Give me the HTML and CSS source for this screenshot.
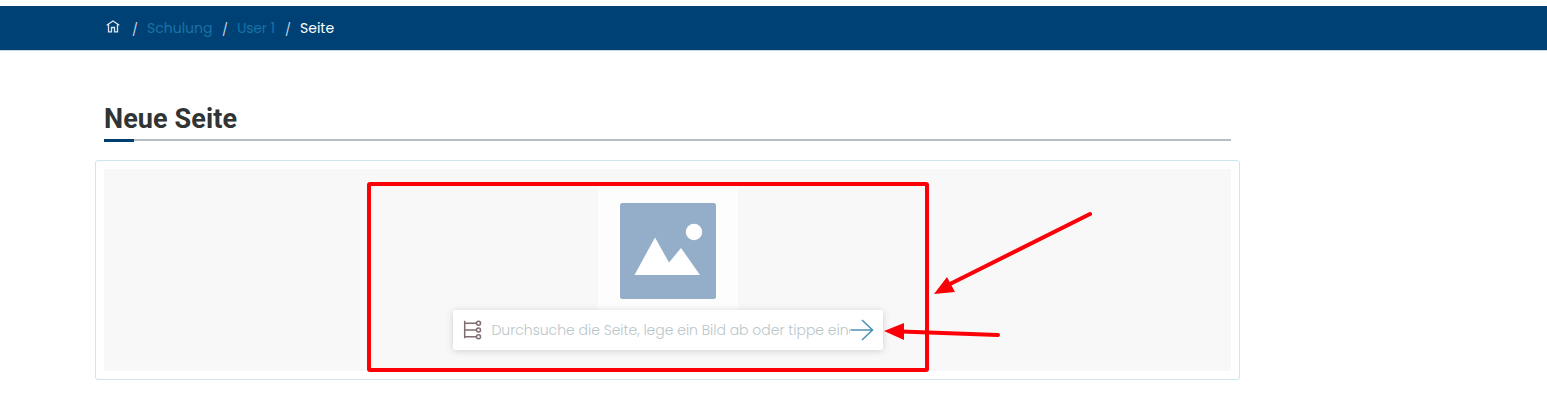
FILE: index.html
```
<!DOCTYPE html>
<html lang="de">
<head>
<meta charset="utf-8">
<title>Neue Seite</title>
<link rel="stylesheet" href="styles.css">
</head>
<body>
<nav class="breadcrumb">
  <svg class="home" width="14" height="13" viewBox="0 0 14 13"><path d="M.7 5.200 7 1l6.300 4.200M2.500 4.500v7.300h3V7.500h3v4.300h3V4.500"/></svg>
  <span class="sep">/</span>
  <a class="crumb crumb-parent">Schulung</a>
  <span class="sep">/</span>
  <a class="crumb crumb-user">User 1</a>
  <span class="sep">/</span>
  <span class="crumb current">Seite</span>
</nav>
<main class="page">
  <header class="title-row"><h1 class="title">Neue Seite</h1></header>
  <section class="editor">
    <div class="dropzone">
      <div class="picture">
        <svg width="96" height="96" viewBox="0 0 96 96"><rect width="96" height="96" rx="2.500" fill="#94adc9"/><path d="M14.500 72 35 34.500 49 59.500 61 45 80 72z" fill="#fff"/><circle cx="74" cy="29" r="8.200" fill="#fff"/></svg>
      </div>
      <div class="search">
        <svg class="tree" width="20" height="20" viewBox="0 0 20 20"><path d="M1.700.8v17.500M1.700 3.300h11.800M1.700 10h11.800M1.700 16.700h11.800"/><circle cx="15.500" cy="3.300" r="2"/><circle cx="15.500" cy="10" r="2"/><circle cx="15.500" cy="16.700" r="2"/></svg>
        <div class="placeholder"><span class="hint">Durchsuche die Seite, lege ein Bild ab oder tippe eine</span></div>
        <svg class="go" width="24" height="22" viewBox="0 0 24 22"><path d="M.5 11h22M12 1l10.500 10L12 21"/></svg>
      </div>
    </div>
  </section>
</main>
<svg class="annotations" width="1547" height="419" viewBox="0 0 1547 419">
  <rect x="369" y="184" width="558" height="186" rx="1"/>
  <path d="M1090 214 948 285M998 335 901 331.500"/>
  <path class="head" d="m934 294 13-17 8 15zM884 331l20-8v17z"/>
</svg>
</body>
</html>
```
FILE: styles.css
```
* { box-sizing: border-box; }
body {
  margin: 0;
  padding-top: 6px;
  min-height: 419px;
  background: #fff;
  font-family: Poppins, Inter, sans-serif;
  position: relative;
  overflow: hidden;
}
.breadcrumb {
  height: 44px;
  padding-left: 106px;
  background: #004175;
  display: flex;
  align-items: center;
  font-size: 14px;
  line-height: 20px;
  box-shadow: 0 1px 0 #c4dae6;
}
.home { fill: none; stroke: #dce6f1; stroke-width: 1.300; margin-top: -3px; }
.sep { width: 5px; margin: 0 10px; padding-top: 3px; color: #c3d5e6; font-size: 12.500px; }
.home + .sep { margin-left: 12px; }
.crumb { white-space: nowrap; color: #1972a6; }
.crumb-parent { width: 65px; }
.crumb-user { width: 38px; letter-spacing: -.200px; }
.current { color: #fff; }
.page { width: 1145px; margin-left: 95px; padding-top: 49px; }
.title-row {
  height: 42px;
  margin: 0 9px;
  border-bottom: 2px solid #b6c0c2;
  position: relative;
}
.title-row::after {
  content: "";
  position: absolute;
  left: 0;
  top: 40px;
  width: 30px;
  height: 3px;
  background: #003e70;
}
.title {
  margin: 0;
  padding-top: 1px;
  font: 700 27px/38px Roboto, sans-serif;
  letter-spacing: .1px;
  color: #303434;
  white-space: nowrap;
}
.editor {
  height: 220px;
  margin-top: 19px;
  padding: 8px;
  border: 1px solid #cde5ee;
  border-radius: 3px;
}
.dropzone {
  height: 202px;
  padding-top: 20px;
  background: #f8f8f8;
  display: flex;
  flex-direction: column;
  align-items: center;
}
.picture {
  width: 140px;
  height: 121px;
  padding: 14px 0 0 22px;
  background: #fdfdfd;
}
.picture svg { display: block; }
.search {
  width: 430px;
  height: 40px;
  padding: 0 10px;
  background: #fff;
  border-radius: 2px;
  box-shadow: 0 1px 7px rgba(0, 0, 0, .17);
  display: flex;
  align-items: center;
}
.tree { flex: none; fill: none; stroke: #806d70; stroke-width: 1.500; }
.placeholder {
  width: 358px;
  margin-left: 9px;
  flex: none;
  overflow: hidden;
  white-space: nowrap;
  font-size: 14px;
  font-weight: 300;
  letter-spacing: -.020px;
  line-height: 22px;
  color: #b9c6ca;
}
.go { flex: none; fill: none; stroke: #4f92b5; stroke-width: 1.600; }
.annotations { position: absolute; left: 0; top: 0; fill: none; stroke: #fb0006; stroke-width: 4; stroke-linecap: round; }
.head { fill: #fb0006; stroke: none; }
```
